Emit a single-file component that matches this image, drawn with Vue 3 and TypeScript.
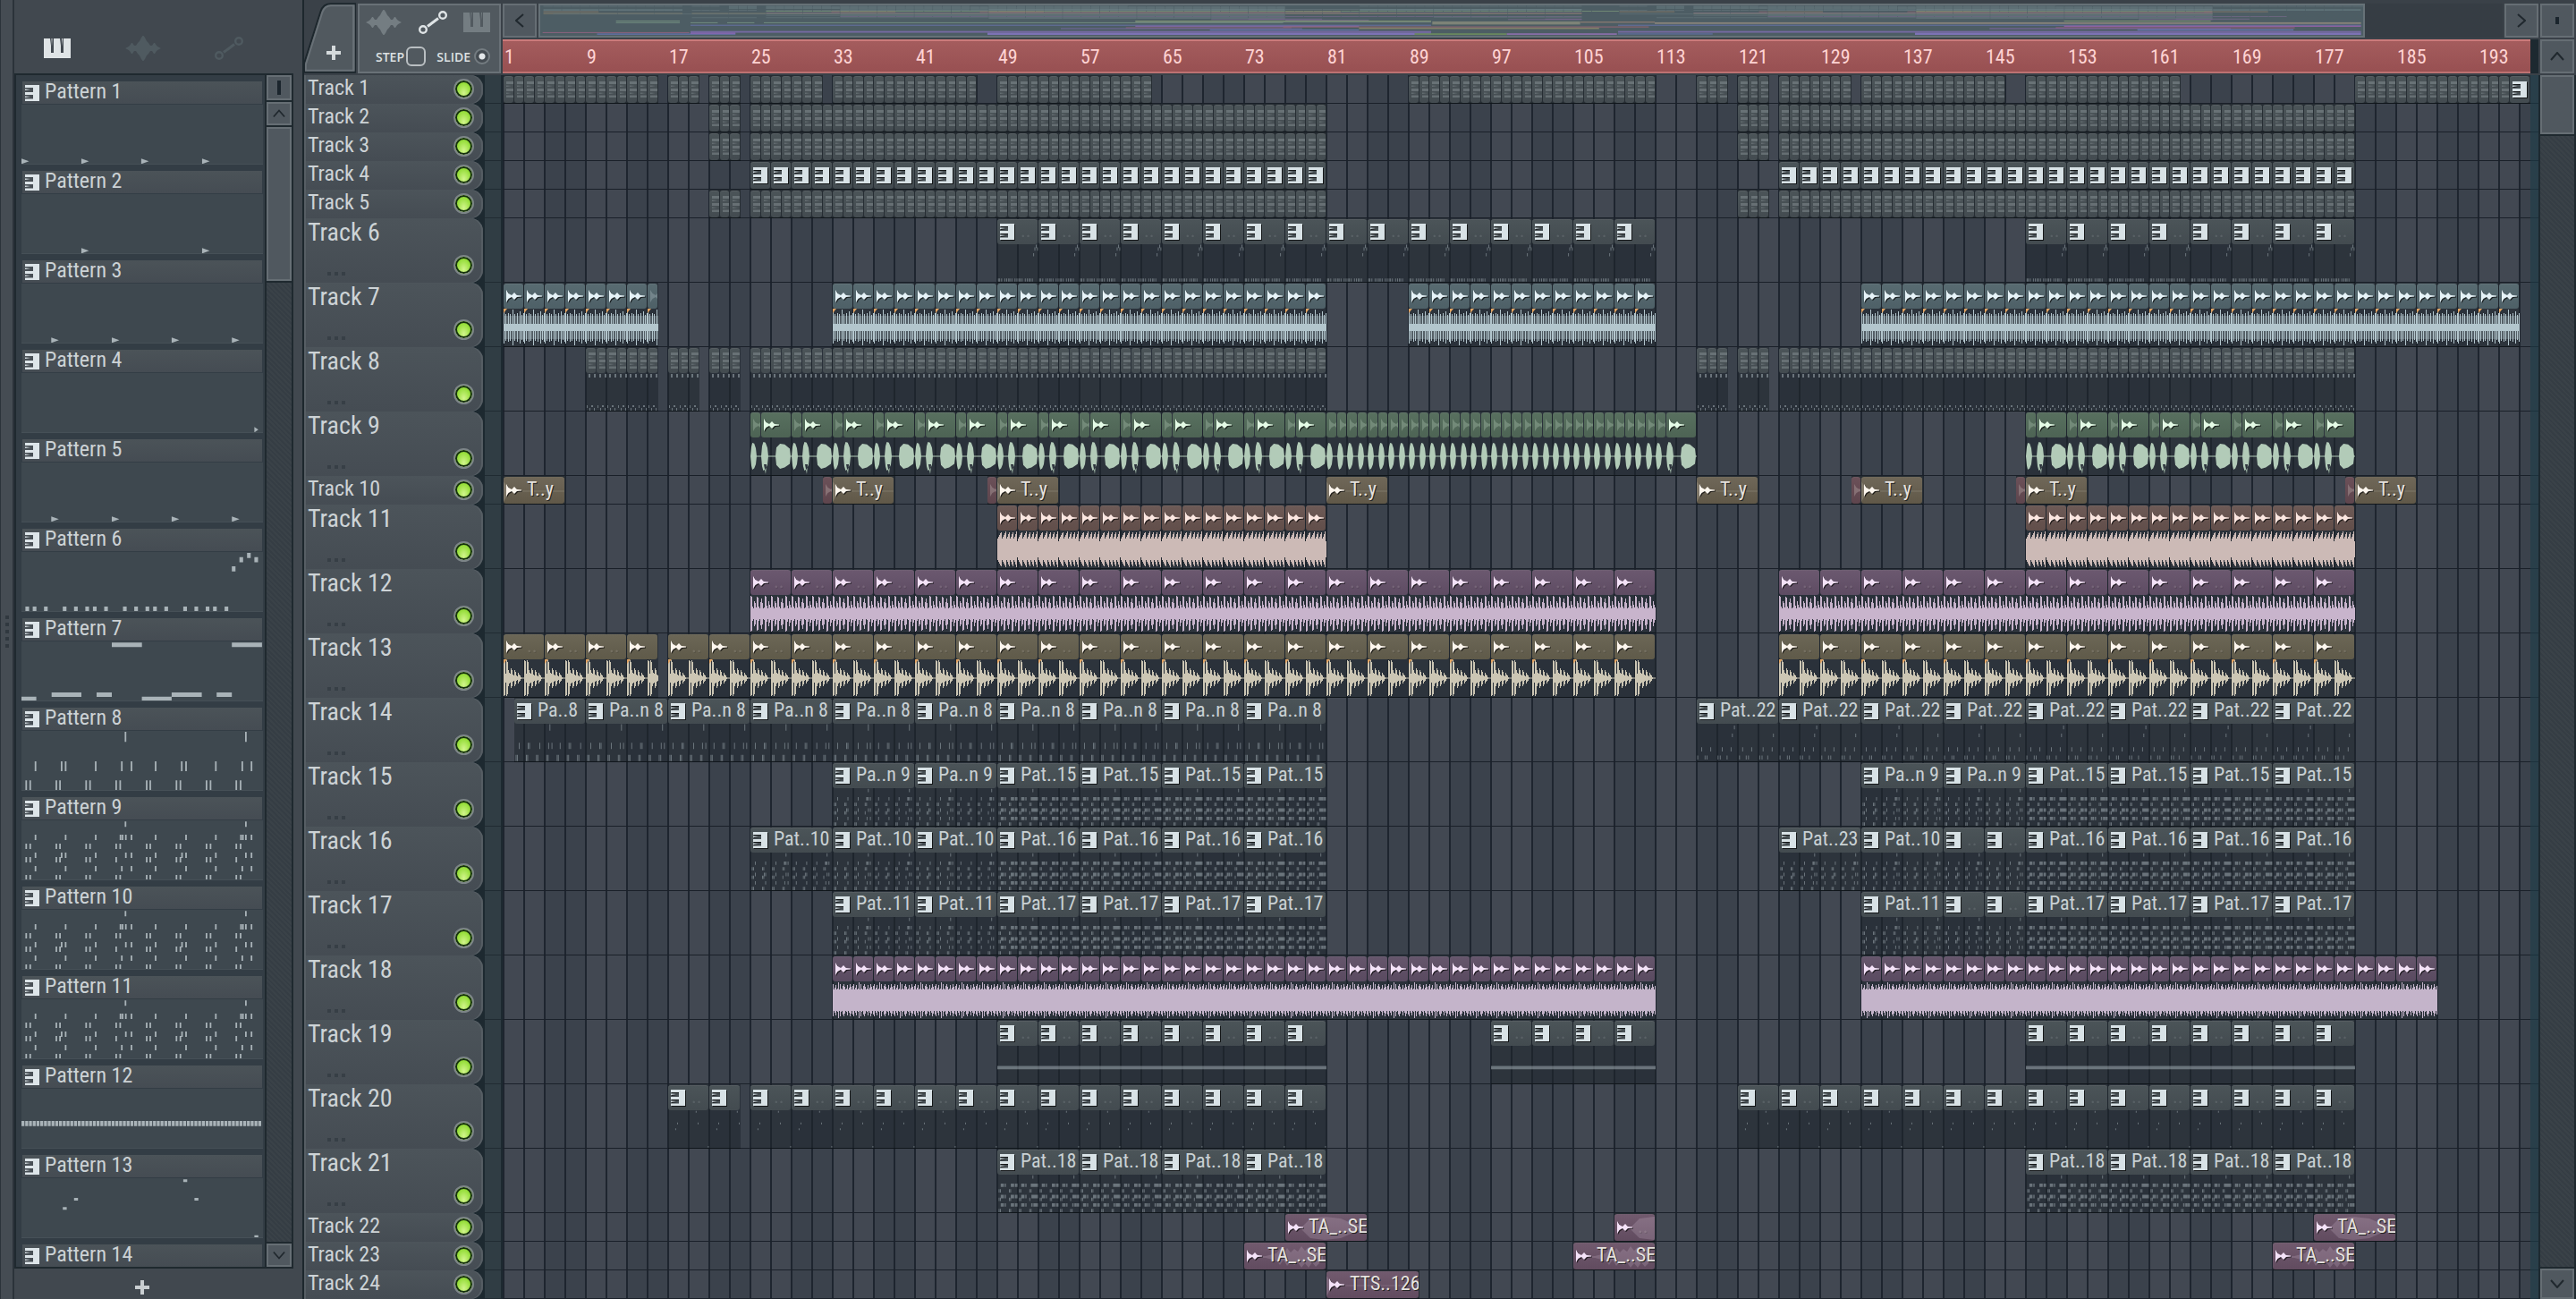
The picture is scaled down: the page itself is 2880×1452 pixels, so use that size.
<script setup lang="ts">
type Kind = 'pat' | 'wav'
interface Clip {
  x: number
  w: number
  kind: Kind
  label: string
  art: string
  haze: string
  mark: boolean
  tone: string
  dim: boolean
}
interface Track {
  name: string
  tall: boolean
  clips: Clip[]
}
type Rect = [number, number, number, number]

const BAR = 11.5
const px = (bars: number): number => Math.round(bars * BAR)

/* ---------- note patterns, stored on a 730 x 201 sheet ---------- */
const SHEET_W = 730
const SHEET_H = 201
const row = (y: number, h: number, w: number, xs: number[]): Rect[] =>
  xs.map((x): Rect => [x - 65, y, w, h])

const pairs = [77, 89, 168, 179, 258, 270, 349, 361, 441, 452, 531, 543, 622, 634, 712, 725]
const chords: Rect[] = [
  ...row(4, 18, 5, [377, 741]),
  ...row(48, 18, 5, [105, 196, 287, 362, 368, 378, 395, 468, 560, 650, 726, 732, 741, 758]),
  ...row(78, 18, 5, pairs),
  ...row(108, 18, 5, [105, 184, 196, 287, 378, 395, 468, 548, 560, 650, 741, 758]),
  ...row(123, 18, 5, [77, 89, 168, 179, 258, 270, 349, 441, 452, 531, 543, 622, 634, 712]),
  ...row(153, 18, 5, [105, 196, 287, 366, 395, 468, 560, 650, 730, 758]),
  ...row(183, 18, 5, pairs),
]
const denseXs = [0, 1, 2, 3].flatMap((q) => [30, 48, 66, 120, 138, 156, 168].map((o) => 65 + q * 182 + o))
const sheets: Record<string, Rect[]> = {
  p6: [
    ...row(183, 17, 11, [77, 99, 133, 190, 224, 258, 281, 315, 372, 406, 440, 463, 497, 554, 588, 622, 644, 679]),
    [636, 48, 11, 17],
    [659, 17, 11, 17],
    [682, 3, 11, 17],
    [704, 17, 11, 17],
  ],
  p7: [
    [273, 4, 91, 15], [636, 4, 91, 15], [91, 171, 90, 15], [227, 171, 46, 15],
    [0, 185, 45, 15], [364, 185, 90, 15], [454, 171, 91, 15], [590, 171, 46, 15],
  ],
  p8: [
    ...row(3, 34, 5, [377, 741]),
    ...row(102, 33, 5, [105, 184, 196, 287, 366, 395, 468, 547, 560, 650, 730, 758]),
    ...row(166, 34, 5, pairs),
  ],
  p9: chords,
  p12: Array.from({ length: 64 }, (_, i): Rect => [i * 11.36, 108, 9, 17]),
  p13: [[125, 97, 12, 9], [159, 66, 12, 9], [489, 4, 12, 9], [523, 66, 12, 9], [704, 191, 12, 9]],
  p15: [...chords, ...row(48, 18, 11, denseXs), ...row(108, 18, 11, denseXs), ...row(153, 18, 11, denseXs)],
  p22: [
    ...row(10, 20, 5, [395]),
    ...row(52, 20, 5, [377, 741]),
    ...row(126, 22, 6, [105, 185, 287, 366, 468, 548, 650, 730]),
    ...row(170, 22, 6, [70, 135, 152, 250, 270, 330, 440, 500, 520, 620, 640, 690]),
  ],
}
const triangles: Record<string, number[]> = {
  t1: [0, 181, 362, 546],
  t2: [181, 546],
  t3: [90, 273, 454, 636],
  t4: [704],
}

const drawSheet = (key: string, width: number, height: number): string => {
  const sx = width / SHEET_W
  const sy = height / SHEET_H
  if (triangles[key]) {
    const size = key === 't4' ? 12 : 23
    return triangles[key]
      .map((x) => `M${x * sx} ${181 * sy}L${(x + size) * sx} ${190 * sy}L${x * sx} ${199 * sy}z`)
      .join('')
  }
  return (sheets[key] ?? [])
    .map(([x, y, w, h]) => {
      const rw = Math.max(w * sx, 1)
      const rh = Math.max(h * sy, 1)
      return `M${(x * sx).toFixed(1)} ${(y * sy).toFixed(1)}h${rw.toFixed(1)}v${rh.toFixed(1)}h${(-rw).toFixed(1)}z`
    })
    .join('')
}

/* ---------- waveforms, 42px tall around a middle line ---------- */
const MID = 21
const wave = (halves: number[], width: number): string => {
  let top = ''
  let bottom = ''
  for (let x = 0; x < width; x++) {
    const h = halves[x % halves.length]
    top += `L${x} ${MID - h}L${x + 1} ${MID - h}`
    bottom = `L${x + 1} ${MID + h}L${x} ${MID + h}` + bottom
  }
  return `M0 ${MID}${top}${bottom}z`
}
const blob = (x: number, w: number, h: number): string =>
  `M${x} ${MID}L${x + 1} ${MID - h * 0.7}L${x + w * 0.3} ${MID - h}L${x + w * 0.6} ${MID - h * 0.95}L${x + w - 1} ${MID - h * 0.6}L${x + w} ${MID}L${x + w - 1} ${MID + h * 0.6}L${x + w * 0.6} ${MID + h * 0.9}L${x + w * 0.3} ${MID + h}L${x + 1} ${MID + h * 0.7}z`

const hat = [18, 4, 15, 4, 4, 16, 4, 15, 4, 4, 20, 4, 15, 4, 4, 16, 4, 4, 18, 4, 14, 4, 16]
const lead = [20, 19, 8, 6, 14, 12, 7, 19, 18, 8, 6, 13, 17, 12, 6, 7, 20, 19, 9, 6, 14, 10, 7]
const kick = [20, 19, 5, 20, 18, 9, 6, 5, 11, 9, 4, 3, 9, 7, 3, 2, 6, 4, 3, 1, 0.5, 0.5, 0.5]
const pad = [18, 12, 14, 17, 12, 13, 20, 12, 18, 13, 12, 16, 18, 15, 12, 13, 17, 12, 14, 18, 15, 12, 16]
const saw = [12, 14, 16, 18, 19, 12, 14, 16, 18, 20, 12, 14, 17, 19, 12, 14, 17, 19, 12, 14, 17, 20, 9]

const drawWave = (key: string, width: number): string => {
  switch (key) {
    case 'hat': return wave(hat, width)
    case 'lead': return wave(lead, width)
    case 'kick': return wave(kick, width)
    case 'pad': return wave(pad, width)
    case 'saw': return wave(saw, width)
    case 'vox1': return `M0 20.5h${width}v1H0z` + blob(0, 7, 15)
    case 'vox3': return `M0 20.5h${width}v1H0z` + blob(0, 8, 16) + 'M3 30l2 11 1-11z' + blob(16, 17, 14)
    default: return ''
  }
}

/* ---------- arrangement ---------- */
const waves = ['hat', 'lead', 'kick', 'pad', 'saw', 'vox1', 'vox3']
const clip = (s: number, e: number, kind: Kind, tone: string, art = '', label = ''): Clip => {
  const x = px(s)
  const w = px(e) - x
  const period = label ? 92 : art === 'p9' ? 92 : 46
  let d = ''
  if (waves.includes(art)) d = drawWave(art, w)
  else if (art === 'tick') d = 'M3 1h2v4h-2zM9 1h2v4h-2zM1 36h1v3h-1zM4 39h1v3h-1zM6 36h2v2h-2zM9 39h1v3h-1z'
  else if (art === 'swell') d = 'M0 15L18 14L28 4L44 2L62 4L78 11L92 15L78 19L62 26L44 28L28 26L18 16z'
  else if (art === 'buzz') d = 'M0 15L24 14L36 11L40 6L44 12L48 5L52 10L56 6L60 9L64 3L68 8L72 4L76 9L80 4L84 8L88 12L88 18L84 22L80 26L76 21L72 27L68 22L64 27L60 21L56 24L52 20L48 25L44 18L40 24L36 19L24 16z'
  else if (art === 'hit') d = 'M0 4L5 12L10 14.5H104V15.5H10L5 18L0 27z'
  else if (art) d = drawSheet(art, period, 42)
  const haze = art === 'hat' ? `M0 8h${w}v26H0z` : ''
  return { x: x + 1, w, kind, label, art: d, haze, mark: art === 'hat' || art === 'kick', tone, dim: e - s < 2 }
}
const run = (s: number, e: number, step: number, kind: Kind, tone: string, art = '', label = ''): Clip[] => {
  const out: Clip[] = []
  for (let b = s; b < e; b += step) out.push(clip(b, Math.min(b + step, e), kind, tone, art, label))
  return out
}
const runs = (spans: number[][], step: number, kind: Kind, tone: string, art = '', label = ''): Clip[] =>
  spans.flatMap(([s, e]) => run(s, e, step, kind, tone, art, label))

const drums = (): Clip[] => runs([[20, 23], [24, 80], [120, 123], [124, 180]], 1, 'pat', 'slate')
const vox = (s: number, e: number): Clip[] => {
  const out: Clip[] = []
  for (let b = s; b < e; b += 4) {
    out.push(clip(b, b + 1, 'wav', 'green', 'vox1'), clip(b + 1, b + 4, 'wav', 'green', 'vox3'))
  }
  return out
}

const arrangement: { tall: boolean; clips: Clip[] }[] = [
  {
    tall: false,
    clips: [
      ...runs([[0, 15], [16, 19], [20, 23], [24, 31], [32, 46], [48, 63], [88, 112], [116, 119], [120, 123], [124, 131], [132, 146], [148, 163], [180, 195]], 1, 'pat', 'slate'),
      clip(195, 197, 'pat', 'slate'),
    ],
  },
  { tall: false, clips: drums() },
  { tall: false, clips: drums() },
  { tall: false, clips: runs([[24, 80], [124, 180]], 2, 'pat', 'slate') },
  { tall: false, clips: drums() },
  { tall: true, clips: runs([[48, 112], [148, 180]], 4, 'pat', 'slate', 'p6') },
  { tall: true, clips: runs([[0, 15], [32, 80], [88, 112], [132, 196]], 2, 'wav', 'teal', 'hat') },
  { tall: true, clips: runs([[8, 15], [16, 19], [20, 23], [24, 80], [116, 119], [120, 123], [124, 180]], 1, 'pat', 'slate', 'tick') },
  { tall: true, clips: [...vox(24, 80), ...run(80, 113, 1, 'wav', 'green', 'vox1'), clip(113, 116, 'wav', 'green', 'vox3'), ...vox(148, 180)] },
  {
    tall: false,
    clips: [
      ...[31, 47, 131, 147, 179].map((b) => clip(b, b + 1, 'wav', 'red')),
      ...[0, 32, 48, 80, 116, 132, 148, 180].map((b) => clip(b, b + 6, 'wav', 'sand', 'hit', 'T..y')),
    ],
  },
  { tall: true, clips: runs([[48, 80], [148, 180]], 2, 'wav', 'rust', 'saw') },
  { tall: true, clips: runs([[24, 112], [124, 180]], 4, 'wav', 'plum', 'lead') },
  { tall: true, clips: runs([[0, 15], [16, 112], [124, 180]], 4, 'wav', 'olive', 'kick') },
  {
    tall: true,
    clips: [clip(1, 8, 'pat', 'slate', 'p8', 'Pa..8'), ...run(8, 80, 8, 'pat', 'slate', 'p8', 'Pa..n 8'), ...run(116, 180, 8, 'pat', 'slate', 'p22', 'Pat..22')],
  },
  { tall: true, clips: [...runs([[32, 48], [132, 148]], 8, 'pat', 'slate', 'p9', 'Pa..n 9'), ...runs([[48, 80], [148, 180]], 8, 'pat', 'slate', 'p15', 'Pat..15')] },
  {
    tall: true,
    clips: [
      ...runs([[24, 48], [132, 140]], 8, 'pat', 'slate', 'p9', 'Pat..10'),
      ...run(140, 148, 4, 'pat', 'slate', 'p9'),
      clip(124, 132, 'pat', 'slate', 'p9', 'Pat..23'),
      ...runs([[48, 80], [148, 180]], 8, 'pat', 'slate', 'p15', 'Pat..16'),
    ],
  },
  {
    tall: true,
    clips: [
      ...runs([[32, 48], [132, 140]], 8, 'pat', 'slate', 'p9', 'Pat..11'),
      ...run(140, 148, 4, 'pat', 'slate', 'p9'),
      ...runs([[48, 80], [148, 180]], 8, 'pat', 'slate', 'p15', 'Pat..17'),
    ],
  },
  { tall: true, clips: runs([[32, 112], [132, 188]], 2, 'wav', 'violet', 'pad') },
  { tall: true, clips: runs([[48, 80], [96, 112], [148, 180]], 4, 'pat', 'slate', 'p12') },
  { tall: true, clips: runs([[16, 23], [24, 80], [120, 180]], 4, 'pat', 'slate', 'p13') },
  { tall: true, clips: runs([[48, 80], [148, 180]], 8, 'pat', 'slate', 'p15', 'Pat..18') },
  { tall: false, clips: [clip(76, 84, 'wav', 'mauve', 'swell', 'TA_..SE'), clip(108, 112, 'wav', 'mauve', 'swell'), clip(176, 184, 'wav', 'mauve', 'swell', 'TA_..SE')] },
  { tall: false, clips: [72, 104, 172].map((b) => clip(b, b + 8, 'wav', 'mauve', 'buzz', 'TA_..SE')) },
  { tall: false, clips: [clip(80, 89, 'wav', 'mauve', 'hit', 'TTS..126')] },
]
const tracks: Track[] = arrangement.map((t, i) => ({ name: `Track ${i + 1}`, ...t }))

/* ---------- pattern picker ---------- */
const pickerArt = ['t1', 't2', 't3', 't4', 't3', 'p6', 'p7', 'p8', 'p9', 'p9', 'p9', 'p12', 'p13', '']
const patterns = pickerArt.map((key, i) => ({
  name: `Pattern ${i + 1}`,
  d: key ? drawSheet(key, 270, 67) : '',
  body: key !== '',
}))

const marks = Array.from({ length: 25 }, (_, i) => i * 8 + 1)

/* ---------- overview strip ---------- */
const toneColor: Record<string, string> = {
  slate: '#64757b', teal: '#7b9499', green: '#7f9a7d', sand: '#96836b', red: '#956873',
  rust: '#8c6e72', plum: '#7a6a88', olive: '#9b8a6b', violet: '#76698a', mauve: '#7f6a93',
}
const overview = [
  ...tracks.flatMap((t, i) =>
    t.clips.map((c) => ({ x: 10 + (c.x / BAR) * 7.84, w: (c.w / BAR) * 7.84 - 0.4, y: 17 + i * 2.15, h: 2.2, c: toneColor[c.tone] })),
  ),
  ...(
    [
      [72, 54, 69, 3, '#748f80'], [511, 250, 69, 3, '#7d9472'], [1296, 124, 69, 3, '#7d9472'],
      [72, 54, 75, 3, '#748f80'], [135, 23, 75, 3, '#748f80'], [166, 23, 75, 3, '#748f80'], [197, 439, 75, 3, '#748f80'],
      [511, 250, 72, 4, '#6f7f7c'], [762, 125, 72, 11, '#7d8377'], [887, 63, 72, 5, '#80766f'], [950, 597, 75, 6, '#87837a'],
      [135, 626, 84, 3, '#6873a8'], [919, 628, 84, 3, '#6873a8'], [511, 189, 87, 4, '#8068a4'], [636, 309, 90, 3, '#9a6676'],
      [1296, 251, 87, 4, '#9463a4'], [503, 140, 93, 3, '#95637c'], [448, 204, 96, 3, '#7568a0'], [700, 203, 94, 5, '#838169'],
      [1289, 202, 93, 3, '#a45f85'], [1233, 204, 96, 3, '#8066a4'], [574, 126, 101, 3, '#6777b4'], [1358, 132, 100, 4, '#6777b4'],
      [135, 626, 106, 6, '#7669a2'], [919, 628, 106, 6, '#7669a2'], [10, 124, 110, 3, '#8f6380'], [56, 117, 115, 4, '#6673b0'],
      [135, 38, 111, 6, '#8167ad'], [386, 375, 112, 8, '#7c72b4'], [747, 78, 114, 6, '#69865f'], [825, 93, 114, 6, '#866da6'],
      [1170, 377, 112, 8, '#7c72b4'], [919, 80, 115, 3, '#6673b0'],
    ] as [number, number, number, number, string][]
  ).map(([x, w, y, h, c]) => ({ x, w, y, h, c })),
]
</script>

<template>
  <svg class="defs" aria-hidden="true">
    <symbol id="keys-side" viewBox="0 0 16 18">
      <path d="M0 0H16V18H0V15.500H9V11H0V8H9V3H0zM0 4.500L6 5L0 6zM0 12.500L6 13L0 14z" />
    </symbol>
    <symbol id="wave-small" viewBox="0 0 18 16">
      <path d="M0 1L2.500 5L6 7L9 4L12 7L17 7.500V8.500L12 9L9 12L6 9L2.500 11L0 15z" />
    </symbol>
    <symbol id="keys" viewBox="0 0 30 22">
      <path d="M0 0H7L8 8V16H11V0H18L19 8V16H22V0H30V22H0z M8.500 0H9.500L9 9z M20 0H21L20.500 9z" />
    </symbol>
    <symbol id="wave" viewBox="0 0 40 28">
      <path d="M0 14L3 12.500L5 11L7 8L8 8L10 11L12 11L14 8L16 6L18 2L19.500 0H20.500L22 2L24 6L26 8L28 11L30 11L32 8H33L35 11L37 12.500L40 14L37 15.500L35 17L33 20H32L30 17H28L26 20L24 22L22 26L20.500 28H19.500L18 26L16 22L14 20L12 17H10L8 20H7L5 17L3 15.500z" />
    </symbol>
    <symbol id="curve" viewBox="0 0 32 26">
      <g fill="none" stroke="currentColor" stroke-width="2.400">
        <circle cx="5" cy="21" r="3.800" />
        <circle cx="27" cy="5" r="3.800" />
        <path d="M10 17.500L22 8.500" stroke-width="3" />
      </g>
    </symbol>
    <symbol id="plus" viewBox="0 0 16 16"><path d="M6 0H10V6H16V10H10V16H6V10H0V6H6z" /></symbol>
    <symbol id="up" viewBox="0 0 16 10"><path d="M1 9L8 1L15 9" fill="none" stroke="currentColor" stroke-width="2" /></symbol>
    <symbol id="down" viewBox="0 0 16 10"><path d="M1 1L8 9L15 1" fill="none" stroke="currentColor" stroke-width="2" /></symbol>
    <symbol id="left" viewBox="0 0 10 16"><path d="M9 1L1 8L9 15" fill="none" stroke="currentColor" stroke-width="2" /></symbol>
    <symbol id="right" viewBox="0 0 10 16"><path d="M1 1L9 8L1 15" fill="none" stroke="currentColor" stroke-width="2" /></symbol>
  </svg>

  <main class="app">
    <div class="edge"><i v-for="n in 5" :key="n" /></div>

    <aside class="browser">
      <nav class="tabs">
        <button class="tab on" aria-label="Patterns"><svg width="30" height="22"><use href="#keys" /></svg></button>
        <button class="tab" aria-label="Audio"><svg width="40" height="28"><use href="#wave" /></svg></button>
        <button class="tab" aria-label="Automation"><svg width="32" height="26"><use href="#curve" /></svg></button>
      </nav>
      <div class="picker">
        <div class="list">
          <article v-for="p in patterns" :key="p.name" class="pattern">
            <header><svg width="16" height="18"><use href="#keys-side" /></svg><span>{{ p.name }}</span></header>
            <svg v-if="p.body" class="sheet"><path :d="p.d" /></svg>
          </article>
        </div>
        <div class="scroll">
          <button class="key split" aria-label="Split"><i class="bar" /></button>
          <button class="key small" aria-label="Scroll up"><svg width="14" height="10"><use href="#up" /></svg></button>
          <div class="thumb" />
          <div class="gutter" />
          <button class="key small" aria-label="Scroll down"><svg width="14" height="10"><use href="#down" /></svg></button>
        </div>
      </div>
      <button class="add" aria-label="Add pattern"><svg width="16" height="16"><use href="#plus" /></svg></button>
    </aside>

    <section class="playlist">
      <div class="top">
        <button class="slant" aria-label="Add track">
          <svg class="shape" viewBox="0 0 60 80">
            <path d="M0 80V70L19 10Q22 1 31 1H60V80z" fill="#51595f" stroke="#1d272d" stroke-width="2" />
            <path d="M2 78V71L21 11Q24 3 31 3H57V78z" fill="none" stroke="#697177" stroke-width="2" />
          </svg>
          <svg class="cross" width="16" height="16"><use href="#plus" /></svg>
        </button>
        <div class="tools">
          <div class="modes">
            <button aria-label="Audio"><svg width="40" height="28"><use href="#wave" /></svg></button>
            <button class="on" aria-label="Automation"><svg width="32" height="26"><use href="#curve" /></svg></button>
            <button aria-label="Patterns"><svg width="30" height="22"><use href="#keys" /></svg></button>
          </div>
          <div class="flags">
            <label for="step">STEP</label><input id="step" type="checkbox" />
            <label for="slide" class="second">SLIDE</label><input id="slide" type="radio" checked />
          </div>
        </div>
        <div class="timeline">
          <div class="hscroll">
            <button class="key big" aria-label="Scroll left"><svg width="10" height="16"><use href="#left" /></svg></button>
            <div class="rail">
              <svg class="overview" viewBox="8 15 1541 108" preserveAspectRatio="none">
                <rect v-for="(s, i) in overview" :key="i" :x="s.x" :y="s.y" :width="s.w" :height="s.h" :fill="s.c" />
              </svg>
            </div>
            <button class="key big" aria-label="Scroll right"><svg width="10" height="16"><use href="#right" /></svg></button>
          </div>
          <div class="ruler"><div class="marks"><span v-for="m in marks" :key="m">{{ m }}</span></div></div>
        </div>
        <div class="corner">
          <button class="key big" aria-label="Options"><i class="dot" /></button>
          <button class="key big" aria-label="Scroll up"><svg width="16" height="10"><use href="#up" /></svg></button>
        </div>
      </div>

      <div class="body">
        <div class="rows">
          <div v-for="t in tracks" :key="t.name" class="track" :class="{ tall: t.tall }">
            <div class="head">
              <span class="name">{{ t.name }}</span>
              <span v-if="t.tall" class="more"><i /><i /><i /></span>
              <button class="led" :aria-label="'Mute ' + t.name" />
            </div>
            <div class="strip" />
            <div class="lane">
              <div
                v-for="(c, i) in t.clips"
                :key="i"
                class="clip"
                :class="[c.tone, c.kind, { dim: c.dim }]"
                :style="{ left: c.x + 'px', width: c.w + 'px' }"
              >
                <div class="cap">
                  <svg v-if="!t.tall && c.art" class="ghost"><path :d="c.art" /></svg>
                  <svg v-if="c.kind === 'pat'" class="icon" width="16" height="18"><use href="#keys-side" /></svg>
                  <svg v-else class="icon" width="18" height="16"><use href="#wave-small" /></svg>
                  <span v-if="c.label">{{ c.label }}</span>
                  <span v-else-if="c.w > 40" class="faint">..</span>
                </div>
                <svg v-if="t.tall" class="art">
                  <path v-if="c.haze" class="haze" :d="c.haze" />
                  <path :d="c.art" />
                  <path v-if="c.mark" class="mark" d="M0 0H4L0 5z" />
                </svg>
              </div>
            </div>
          </div>
        </div>
        <div class="vscroll">
          <div class="thumb" />
          <div class="gutter" />
          <button class="key big" aria-label="Scroll down"><svg width="16" height="10"><use href="#down" /></svg></button>
        </div>
      </div>
    </section>
  </main>
</template>

<style>
body {
  background: #434a52;
}
</style>

<style scoped>
* {
  box-sizing: border-box;
}
.defs {
  position: absolute;
  width: 0;
  height: 0;
}
.app {
  display: flex;
  height: 100vh;
  overflow: hidden;
  background: #434a51;
  color: #cdd3d6;
  font-family: "Roboto Condensed", "Liberation Sans Narrow", "Liberation Sans", sans-serif;
  font-size: 24px;
}
button {
  display: flex;
  align-items: center;
  justify-content: center;
  margin: 0;
  padding: 0;
  border: 0;
  background: none;
  color: inherit;
  font: inherit;
}
svg {
  display: block;
  flex: none;
  fill: currentColor;
}

.edge {
  flex: none;
  width: 16px;
  display: flex;
  flex-direction: column;
  align-items: center;
  justify-content: center;
  gap: 4px;
  padding-bottom: 40px;
  background: #454c53;
  border-left: 1px solid #2b333a;
  border-right: 2px solid #2b333a;
}
.edge i {
  width: 4px;
  height: 4px;
  background: #30383f;
}

.browser {
  flex: none;
  width: 322px;
  display: flex;
  flex-direction: column;
  background: #41484f;
}
.tabs {
  height: 82px;
  padding: 26px 66px 0 33px;
  display: flex;
  justify-content: space-between;
}
.tab {
  height: 56px;
  color: #4f5a60;
}
.tab.on {
  color: #dfe4e6;
}
.picker {
  flex: 1;
  min-height: 0;
  margin-right: 10px;
  display: flex;
  border: 2px solid #1f292f;
  background: #333d45;
}
.list {
  flex: 1;
  overflow: hidden;
  padding: 7px 2px 0 6px;
  border-right: 2px solid #1f292f;
}
.pattern {
  height: 100px;
}
.pattern header {
  height: 25px;
  margin: 0 1px 1px;
  padding-left: 3px;
  display: flex;
  align-items: center;
  gap: 6px;
  background: linear-gradient(#4b5358, #454c53);
  color: #dde5e9;
}
.pattern header span {
  line-height: 24px;
  height: 28px;
  color: #ccd2d5;
}
.sheet {
  width: 100%;
  height: 67px;
  background: #3e484f;
  border-bottom: 1px solid #465057;
  fill: #a9b3b8;
}
.scroll,
.vscroll {
  flex: none;
  display: flex;
  flex-direction: column;
  gap: 2px;
  background: #1f292f;
}
.scroll {
  width: 28px;
}
.key,
.thumb {
  flex: none;
  border: 2px solid #666e74;
  background: #50585f;
  color: #20282e;
}
.key.split {
  height: 28px;
}
.key.small {
  height: 26px;
}
.key.big {
  width: 38px;
  height: 38px;
}
.bar {
  width: 4px;
  height: 16px;
  background: #1b252d;
}
.dot {
  width: 4px;
  height: 8px;
  background: #1b252d;
}
.scroll .thumb {
  height: 172px;
}
.gutter {
  flex: 1;
  background: repeating-linear-gradient(45deg, #353d44 0 2px, #3a4248 2px 4px);
}
.add {
  height: 34px;
  margin-right: 36px;
  padding-top: 8px;
  color: #c9ced1;
}

.playlist {
  flex: 1;
  min-width: 0;
  display: flex;
  flex-direction: column;
  border-left: 2px solid #1d272d;
  background: #1d2930;
}
.top {
  flex: none;
  height: 84px;
  display: flex;
  gap: 2px;
  padding-top: 2px;
  background: #3a4148;
}
.slant {
  position: relative;
  width: 58px;
  height: 80px;
  padding: 34px 0 0 8px;
  color: #d5dadc;
}
.shape {
  position: absolute;
  inset: 0;
  width: 100%;
  height: 100%;
}
.cross {
  position: relative;
}
.tools {
  width: 160px;
  height: 78px;
  margin-top: 2px;
  display: flex;
  flex-direction: column;
  justify-content: space-between;
  border: 2px solid #697177;
  background: #51595f;
}
.modes {
  height: 38px;
  padding: 0 10px 0 7px;
  display: flex;
  align-items: center;
  justify-content: space-between;
  color: #747d82;
}
.modes .on {
  color: #dfe4e6;
}
.flags {
  height: 34px;
  padding: 0 10px 0 18px;
  display: flex;
  align-items: center;
  font: 600 14px "Open Sans", sans-serif;
  color: #dde1e3;
}
.flags input {
  appearance: none;
  margin: 0 0 0 2px;
  width: 22px;
  height: 22px;
  border: 2px solid #b9bfc2;
  border-radius: 6px;
}
.flags .second {
  margin-left: auto;
}
.flags input[type="radio"] {
  width: 18px;
  height: 18px;
  margin-left: 4px;
  border-color: #747c81;
  border-radius: 50%;
  background: radial-gradient(circle, #e4e8ea 0 3px, #454c52 4px);
}
.timeline {
  flex: 1;
  min-width: 0;
  padding-top: 2px;
}
.hscroll {
  display: flex;
  height: 38px;
  gap: 2px;
  background: #3a4148;
}
.rail {
  flex: 1;
  background: #363d44;
}
.overview {
  width: 93%;
  height: 38px;
  border: 2px solid #667177;
  background: #4d5d64;
}
.ruler {
  height: 38px;
  margin-top: 2px;
  padding-right: 9px;
  background: #1d2930;
}
.marks {
  display: flex;
  height: 38px;
  overflow: hidden;
  border-top: 2px solid #cb7b7b;
  border-bottom: 2px solid #bd7272;
  background: linear-gradient(#a45c5d, #985052);
  color: #ffd3d3;
  font-size: 22px;
  line-height: 36px;
}
.marks span {
  flex: none;
  width: 92px;
  padding-left: 2px;
}
.corner {
  display: flex;
  flex-direction: column;
  gap: 2px;
  padding: 2px 2px 0 0;
}

.body {
  flex: 1;
  min-height: 0;
  display: flex;
  gap: 2px;
}
.rows {
  flex: 1;
  min-width: 0;
  overflow: hidden;
}
.track {
  display: flex;
  gap: 2px;
  height: 32px;
}
.track.tall {
  height: 72px;
}
.head {
  flex: none;
  width: 200px;
  padding: 0 10px 0 2px;
  display: flex;
  align-items: flex-end;
  border-left: 2px solid #565e64;
  border-radius: 0 14px 14px 0;
  background: linear-gradient(#4c545a, #454c53);
  box-shadow: inset -2px 0 #555d63;
}
.name {
  flex: 1;
  align-self: flex-start;
  line-height: 28px;
}
.tall .name {
  flex: none;
  width: 22px;
  line-height: 32px;
  font-size: 28px;
  white-space: nowrap;
}
.more {
  flex: 1;
  display: flex;
  gap: 4px;
  padding-bottom: 8px;
}
.more i {
  width: 4px;
  height: 4px;
  background: #373f46;
}
.led {
  flex: none;
  width: 23px;
  height: 23px;
  margin-bottom: 5px;
  border: 2px solid #7d8588;
  border-radius: 50%;
  background: radial-gradient(ellipse at 50% 75%, #d2f58c, #92dc35 60%, #7fd020);
  box-shadow: inset 0 0 0 2px #16300f;
}
.tall .led {
  margin-bottom: 8px;
}
.strip {
  flex: none;
  width: 18px;
  background: #303d44;
  border-bottom: 1px solid #202b32;
}
.lane {
  position: relative;
  flex: 1;
  min-width: 0;
  overflow: hidden;
  background:
    repeating-linear-gradient(90deg, #1e252f 0 2px, transparent 2px 23px),
    repeating-linear-gradient(90deg, #424852 0 46px, #3b424c 46px 92px);
}
.lane::before {
  content: "";
  position: absolute;
  inset: auto 0 0;
  height: 1px;
  background: #1a2029;
}
.lane::after {
  content: "";
  position: absolute;
  inset: 0 0 0 auto;
  width: 9px;
  background: rgba(30, 62, 74, 0.6);
}
.clip {
  position: absolute;
  top: 0;
  bottom: 0;
  border-bottom: 1px solid #10161b;
  background: rgba(31, 38, 44, 0.58);
}
.track:not(.tall) .clip {
  background: #262d33;
}
.cap {
  position: relative;
  height: 30px;
  margin: 1px 1px 0 0;
  padding: 0 0 2px 3px;
  display: flex;
  align-items: center;
  overflow: hidden;
  border-radius: 3px;
  border-top: 1px solid rgba(255, 255, 255, 0.1);
  background: var(--cap);
  color: #d8e2e6;
  font-size: 22px;
  white-space: nowrap;
}
.tall .cap {
  height: 28px;
}
.cap .icon {
  position: relative;
  filter: drop-shadow(1px 1px 0 rgba(0, 0, 0, 0.7));
}
.pat .cap .icon {
  margin-right: 7px;
}
.wav .cap .icon {
  margin-right: 5px;
}
.dim .cap .icon {
  opacity: 0.22;
  filter: none;
}
.cap span {
  position: relative;
  line-height: 24px;
  height: 26px;
  color: #c9d1d4;
}
.wav .cap span {
  color: #e6e2df;
  text-shadow: 1px 1px 0 #222;
}
.cap .faint {
  opacity: 0.14;
}
.ghost {
  position: absolute;
  inset: 0;
  width: 100%;
  height: 100%;
  opacity: 0.16;
}
.art {
  width: 100%;
  height: 42px;
  fill: var(--art);
}
.art .haze {
  opacity: 0.3;
}
.art .mark {
  fill: #e2a463;
}
.slate { --cap: linear-gradient(#4b5458, #434b50); --art: rgba(170, 182, 188, 0.5); }
.teal { --cap: linear-gradient(#586b71, #4e6067); --art: #b3c6cd; }
.green { --cap: linear-gradient(#58705f, #4d6354); --art: #b2cbb8; }
.sand { --cap: linear-gradient(#6f6758, #605848); --art: #c8bda8; }
.red { --cap: linear-gradient(#6b5058, #5e454d); --art: #c8a8a8; }
.rust { --cap: linear-gradient(#6d5a56, #614e4a); --art: #ccbab6; }
.plum { --cap: linear-gradient(#6b586f, #5e4c63); --art: #c8b4cc; }
.olive { --cap: linear-gradient(#6b6656, #5f5a49); --art: #ccc6b4; }
.violet { --cap: linear-gradient(#66566c, #594a60); --art: #c4b4ca; }
.mauve { --cap: linear-gradient(#715a6e, #614b5f); --art: #c8b4cc; }
.wav .cap { color: #fdf6ee; }
.teal .cap { color: #e6f3f8; }
.green .cap { color: #e4fbe6; }
.rust .cap { color: #fbe6e0; }
.plum .cap,
.violet .cap,
.mauve .cap { color: #f4e2f8; }

.vscroll {
  width: 40px;
  padding-right: 2px;
}
.vscroll .thumb {
  height: 66px;
}
.vscroll .key {
  height: 34px;
}
</style>
